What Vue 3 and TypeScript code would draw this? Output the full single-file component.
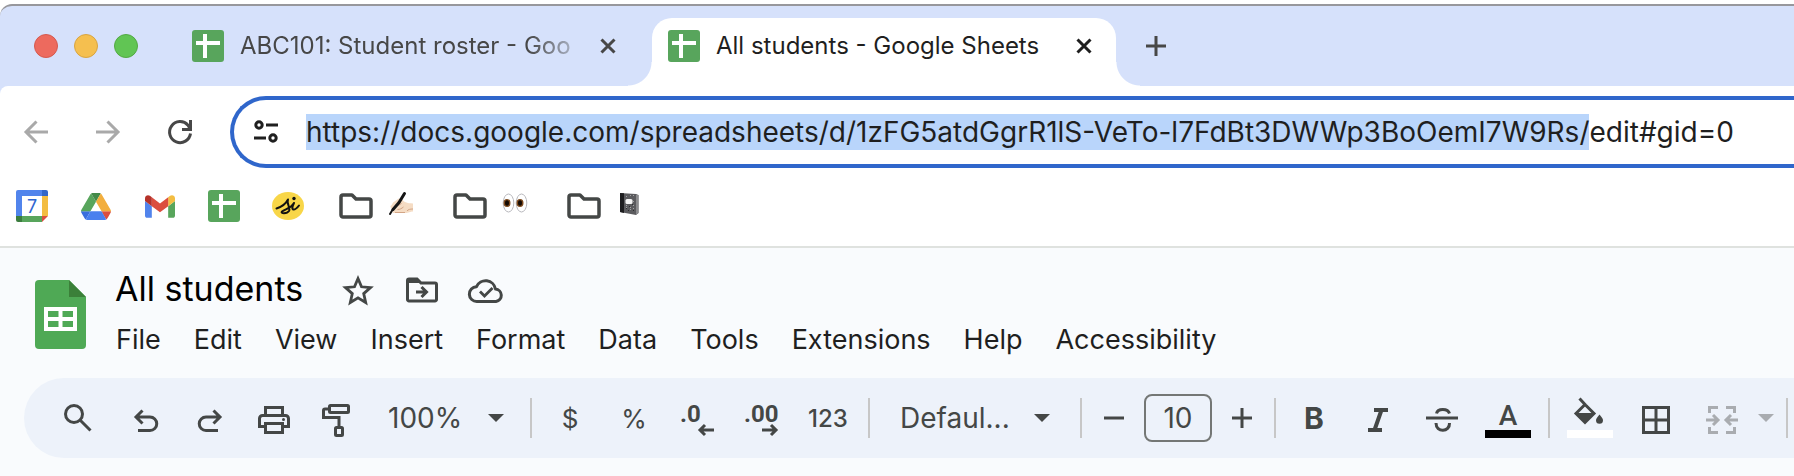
<script setup lang="ts">
import { onMounted, ref } from 'vue'

const url = ref('https://docs.google.com/spreadsheets/d/1zFG5atdGgrR1lS-VeTo-l7FdBt3DWWp3BoOemI7W9Rs/edit#gid=0')
const address = ref<HTMLInputElement | null>(null)
const zoom = ref('100%')
const font = ref('Defaul...')
const fontSize = ref('10')

const menus: string[] = ['File', 'Edit', 'View', 'Insert', 'Format', 'Data', 'Tools', 'Extensions', 'Help', 'Accessibility']
const folders: string[] = ['writing', 'eyes', 'notebook']

onMounted(() => {
  const el = address.value
  if (!el) return
  el.focus()
  el.setSelectionRange(0, url.value.lastIndexOf('/') + 1)
})
</script>

<template>
  <div class="window">
    <header class="tabstrip">
      <div class="lights">
        <button class="light red" aria-label="Close window"></button>
        <button class="light yellow" aria-label="Minimize window"></button>
        <button class="light green" aria-label="Zoom window"></button>
      </div>
      <div class="tab">
        <svg class="i32" viewBox="0 0 32 32"><rect width="32" height="32" rx="3" fill="#58a55c" /><path d="M13 4v24M4 13h24" stroke="#fff" stroke-width="4" /></svg>
        <span class="tab-title faded">ABC101: Student roster - Goo</span>
        <button class="close" aria-label="Close tab"><svg viewBox="0 0 16 16"><path d="M1.500 1.500l13 13M14.500 1.500l-13 13" /></svg></button>
      </div>
      <div class="tab active">
        <svg class="i32" viewBox="0 0 32 32"><rect width="32" height="32" rx="3" fill="#58a55c" /><path d="M13 4v24M4 13h24" stroke="#fff" stroke-width="4" /></svg>
        <span class="tab-title">All students - Google Sheets</span>
        <button class="close" aria-label="Close tab"><svg viewBox="0 0 16 16"><path d="M1.500 1.500l13 13M14.500 1.500l-13 13" /></svg></button>
      </div>
      <button class="newtab" aria-label="New tab"><svg viewBox="0 0 20 20"><path d="M10 0v20M0 10h20" /></svg></button>
    </header>

    <div class="nav-back">
      <nav class="navbar">
        <button class="nav dim" aria-label="Back"><svg viewBox="0 0 24 24"><path d="M24 12H2M12.500 1.500L2 12l10.500 10.500" /></svg></button>
        <button class="nav dim" aria-label="Forward"><svg viewBox="0 0 24 24"><path d="M0 12h22M11.500 1.500L22 12 11.500 22.500" /></svg></button>
        <button class="nav" aria-label="Reload"><svg viewBox="0 0 24 24"><path d="M22.500 13.500A10.500 10.500 0 1 1 20 5.200L22 8.500M22.500 0v9.500H14" /></svg></button>
        <label class="omnibox">
          <svg class="tune" viewBox="0 0 24 24"><circle cx="5" cy="5" r="3.200" /><path d="M12 5h12M0 18h12" /><circle cx="19" cy="18" r="3.200" /></svg>
          <input ref="address" v-model="url" type="text" spellcheck="false" aria-label="Address" />
        </label>
      </nav>
    </div>

    <div class="bookmarks">
      <a href="#" aria-label="Calendar">
        <svg class="i32" viewBox="0 0 32 32">
          <path d="M2 0h24v6H6v20H0V2a2 2 0 0 1 2-2z" fill="#5184ec" /><path d="M26 0h4a2 2 0 0 1 2 2v4h-6z" fill="#3367c9" />
          <path d="M26 6h6v20h-6z" fill="#f3bd42" /><path d="M6 26h20v6H6z" fill="#58a55c" /><path d="M0 26h6v6H2a2 2 0 0 1-2-2z" fill="#3b7d3e" />
          <path d="M26 26h6l-6 6z" fill="#db4e3f" /><path d="M6 6h20v20H6z" fill="#fff" />
          <text x="16" y="22.500" text-anchor="middle" font-size="18" fill="#2f66d0">7</text>
        </svg>
      </a>
      <a href="#" aria-label="Drive">
        <svg class="app" viewBox="0 0 87.3 78">
          <path d="m6.600 66.850 3.850 6.650c.8 1.400 1.950 2.500 3.300 3.300l13.750-23.800h-27.500c0 1.550.4 3.100 1.200 4.500z" fill="#3a6fde" />
          <path d="m43.650 25-13.750-23.800c-1.350.8-2.500 1.900-3.300 3.300l-25.400 44a9.060 9.060 0 0 0-1.200 4.500h27.500z" fill="#58a55c" />
          <path d="m73.550 76.800c1.350-.8 2.500-1.900 3.300-3.300l1.600-2.750 7.650-13.250c.8-1.400 1.200-2.950 1.200-4.500h-27.500l5.850 11.500z" fill="#db4e3f" />
          <path d="m43.650 25 13.750-23.800c-1.350-.8-2.900-1.200-4.500-1.200h-18.500c-1.600 0-3.150.45-4.500 1.200z" fill="#438a48" />
          <path d="m59.800 53h-32.300l-13.750 23.800c1.350.8 2.900 1.200 4.500 1.200h50.800c1.600 0 3.150-.45 4.500-1.200z" fill="#4a80ee" />
          <path d="m73.400 26.500-12.700-22c-.8-1.400-1.950-2.500-3.300-3.300l-13.750 23.800 16.150 28h27.450c0-1.550-.4-3.100-1.200-4.500z" fill="#f2ae3d" />
        </svg>
      </a>
      <a href="#" aria-label="Gmail">
        <svg class="app" viewBox="52 42 88 66">
          <path fill="#5184ec" d="M58 108h14V74L52 59v43c0 3.320 2.690 6 6 6" /><path fill="#58a55c" d="M120 108h14c3.320 0 6-2.690 6-6V59l-20 15" />
          <path fill="#f3bd42" d="M120 48v26l20-15v-8c0-7.420-8.470-11.650-14.400-7.200" /><path fill="#db4e3f" d="M72 74V48l24 18 24-18v26L96 92" />
          <path fill="#b5322a" d="M52 51v8l20 15V48l-5.600-4.200c-5.940-4.450-14.400-.22-14.400 7.200" />
        </svg>
      </a>
      <a href="#" aria-label="Sheets">
        <svg class="i32" viewBox="0 0 32 32"><rect width="32" height="32" rx="3" fill="#58a55c" /><path d="M13 4v24M4 13h24" stroke="#fff" stroke-width="4" /></svg>
      </a>
      <a href="#" aria-label="si">
        <svg class="i32" viewBox="0 0 32 32">
          <ellipse cx="16" cy="16" rx="16" ry="14" fill="#f8d648" />
          <path d="M4.500 18.500C9 17 14 13.500 16 9.500c-2 4 3 8 1 11.500-2 3-9 2.500-7 .5 3-2.500 9-3 12-8.500-1.500 3-2.500 6.500-.5 6.500s4-2 5.500-4" fill="none" stroke="#111" stroke-width="2" stroke-linecap="round" stroke-linejoin="round" />
          <circle cx="22" cy="8.500" r="1.700" fill="#111" />
        </svg>
      </a>
      <div class="folders">
        <a v-for="f in folders" :key="f" href="#" class="folder" :aria-label="f">
          <svg class="dir" viewBox="0 0 34 26"><path d="M4 2h9l4 4h13a2 2 0 0 1 2 2v14a2 2 0 0 1-2 2H4a2 2 0 0 1-2-2V4a2 2 0 0 1 2-2z" fill="none" stroke="#444746" stroke-width="3.500" stroke-linejoin="round" /></svg>
          <svg v-if="f === 'writing'" class="emoji" viewBox="0 0 24 24">
            <path d="M1.500 14c2-1 2-4 4-4.500C8 8 9 6 11.500 6.500 14 7 13.500 9 16 10c3 1.500 5 1 8 1.500v8c-3 0-4 1.500-8 1.500H5c-2 0-2-1.500-.5-2.500l2-1C4 18 1 16 1.500 14z" fill="#f5dcc4" />
            <path d="M7 13.500c2.500 0 4-1 5.500-2M8.500 17.500c2.500 0 4-1 6-2.500M18 19c1-1.500 3-2 6-2M6 20.500h10" fill="none" stroke="#d3a586" stroke-width="1" />
            <path d="M15.500 1.500L10 10.500 4 17.500" fill="none" stroke="#151515" stroke-width="3" stroke-linecap="round" />
            <path d="M4 17L1 22" stroke="#151515" stroke-width="2" stroke-linecap="round" />
          </svg>
          <svg v-else-if="f === 'eyes'" class="emoji" viewBox="0 0 24 24">
            <ellipse cx="5.500" cy="11" rx="5.300" ry="9" fill="#fff" stroke="#b8b8bd" /><ellipse cx="18.500" cy="11" rx="5.300" ry="9" fill="#fff" stroke="#b8b8bd" />
            <ellipse cx="4" cy="11" rx="3.500" ry="4" fill="#7d4a1e" /><ellipse cx="17" cy="11" rx="3.500" ry="4" fill="#7d4a1e" />
            <ellipse cx="4" cy="11" rx="2" ry="2.800" fill="#130a04" /><ellipse cx="17" cy="11" rx="2" ry="2.800" fill="#130a04" />
          </svg>
          <svg v-else class="emoji" viewBox="0 0 24 24">
            <path d="M3 1l16 1 2.500 1v18L19 23 3 20z" fill="#5b5b5e" /><path d="M3 1l4 .3V21l-4-1z" fill="#1d1d1f" /><path d="M19 3v19.500l2.500-1.500V3z" fill="#8b8b8d" />
            <path d="M9 4l1 1m3-2l1 1m2-1l1 1m-8 10l1-1m3 3l1-1m2-2l1 1m0-5l-1 1m-7 5l1 1m3 1l1 1m2-2l1 1" stroke="#a4a4a6" />
            <path d="M9 17l1-1m2-2l1 1m3 4l1-1m-6 1l1-1m3-6l1 1" stroke="#2c2c2e" />
            <rect x="8.500" y="7" width="7" height="5" rx="1.500" fill="#f4f4f4" />
          </svg>
        </a>
      </div>
    </div>

    <main class="sheets">
      <div class="doc">
        <a class="logo" href="#" aria-label="Sheets home">
          <svg viewBox="0 0 52 70">
            <path d="M4 0h30l17 17v48a4 4 0 0 1-4 4H4a4 4 0 0 1-4-4V4a4 4 0 0 1 4-4z" fill="#4fa955" /><path d="M34 0l17 17H34z" fill="#3b8039" />
            <path d="M9 27h33v24H9zM13 31v6h10.500v-6zM27.500 31v6H38v-6zM13 41v6h10.500v-6zM27.500 41v6H38v-6z" fill="#fff" fill-rule="evenodd" />
          </svg>
        </a>
        <div class="doc-main">
          <div class="title-row">
            <h1>All students</h1>
            <button aria-label="Star"><svg viewBox="0 0 36 36"><path d="M18 5.500l3.500 8.300 9 .8-6.800 6 2 8.900-7.700-4.700-7.700 4.700 2-8.900-6.800-6 9-.8z" fill="none" stroke="#444746" stroke-width="2.800" /></svg></button>
            <button aria-label="Move"><svg viewBox="0 0 36 36"><path d="M5 6h8l4 4h14a1.500 1.500 0 0 1 1.500 1.500v15A1.500 1.500 0 0 1 31 28H5a1.500 1.500 0 0 1-1.500-1.500v-19A1.500 1.500 0 0 1 5 6z" fill="none" stroke="#444746" stroke-width="3" /><path d="M4 5h9l4 5H4z" fill="#444746" /><path d="M12 19h10M17.500 14l5 5-5 5" fill="none" stroke="#444746" stroke-width="3" /></svg></button>
            <button aria-label="Saved to Drive"><svg viewBox="0 0 36 36"><path d="M9 28.500a7.400 7.400 0 0 1-.5-14.800A10 10 0 0 1 27.500 16a6.300 6.300 0 0 1 .5 12.500z" fill="none" stroke="#444746" stroke-width="3" stroke-linejoin="round" /><path d="M12 18.500l4.500 4.500 8-8" fill="none" stroke="#444746" stroke-width="2.800" /></svg></button>
          </div>
          <div class="menus" role="menubar">
            <button v-for="m in menus" :key="m" role="menuitem">{{ m }}</button>
          </div>
        </div>
      </div>

      <div class="toolbar" role="toolbar">
        <button class="tool first" aria-label="Search"><svg class="ic" viewBox="0 0 40 40"><circle cx="16" cy="16" r="8.500" /><path d="M22 22l10.500 10.500" /></svg></button>
        <button class="tool" aria-label="Undo"><svg class="ic" viewBox="0 0 40 40"><path d="M12 32.500h12a6.750 6.750 0 0 0 0-13.500H10M16.500 12.500L10 19l6.500 6.500" /></svg></button>
        <button class="tool" aria-label="Redo"><svg class="ic" viewBox="0 0 40 40"><path d="M28 32.500H16A6.750 6.750 0 0 1 16 19h14M23.500 12.500L30 19l-6.500 6.500" /></svg></button>
        <button class="tool" aria-label="Print"><svg class="ic" viewBox="0 0 40 40"><path d="M11.500 17V9.500h17V17M11.500 28.500h-6v-8a3 3 0 0 1 3-3h23a3 3 0 0 1 3 3v8h-6M11.500 25.500h17v9h-17z" /><circle cx="29.500" cy="21.500" r="1.500" class="solid" /></svg></button>
        <button class="tool" aria-label="Paint format"><svg class="ic" viewBox="0 0 40 40"><rect x="11.500" y="7.500" width="19" height="7" rx="1" /><path d="M11 11H7a1.500 1.500 0 0 0-1.500 1.500v7h15.500V29" /><rect x="17.500" y="29.500" width="7" height="8" rx="1" /></svg></button>
        <label class="pick zoom">
          <select v-model="zoom" aria-label="Zoom"><option>100%</option><option>75%</option></select>
          <svg class="caret" viewBox="0 0 16 8"><path d="M0 0h16L8 8z" /></svg>
        </label>
        <i class="sep"></i>
        <button class="tool mid" aria-label="Format as currency">$</button>
        <button class="tool mid" aria-label="Format as percent">%</button>
        <button class="tool" aria-label="Decrease decimals"><svg class="ic" viewBox="0 0 40 40"><text x="2" y="24" class="dec">.0</text><path d="M36 32H22M27 27l-5 5 5 5" /></svg></button>
        <button class="tool" aria-label="Increase decimals"><svg class="ic" viewBox="0 0 40 40"><text x="2" y="24" class="dec">.00</text><path d="M20 32h14M29 27l5 5-5 5" /></svg></button>
        <button class="tool num">123</button>
        <i class="sep"></i>
        <label class="pick font">
          <select v-model="font" aria-label="Font"><option>Defaul...</option><option>Arial</option></select>
          <svg class="caret" viewBox="0 0 16 8"><path d="M0 0h16L8 8z" /></svg>
        </label>
        <i class="sep"></i>
        <div class="stepper">
          <button class="step" aria-label="Decrease font size"><svg viewBox="0 0 20 20"><path d="M0 10h20" /></svg></button>
          <input v-model="fontSize" class="size" type="text" aria-label="Font size" />
          <button class="step" aria-label="Increase font size"><svg viewBox="0 0 20 20"><path d="M0 10h20M10 0v20" /></svg></button>
        </div>
        <i class="sep"></i>
        <button class="tool bold" aria-label="Bold">B</button>
        <button class="tool" aria-label="Italic"><svg class="ic" viewBox="0 0 40 40"><path d="M16 12h14M10 32h14M23.500 12l-7 20" class="thick" /></svg></button>
        <button class="tool" aria-label="Strikethrough"><svg class="ic" viewBox="0 0 40 40"><path d="M4 20h32M14.500 15.500c1-5.500 11.500-5.500 13 0M14 25c0 10 14 9.500 13.500 0" /></svg></button>
        <button class="tool wide textcolor" aria-label="Text color"><svg class="ic" viewBox="0 0 40 40"><text x="20" y="27" text-anchor="middle" class="letter">A</text><path d="M-3 32h46v8H-3z" class="black" /></svg></button>
        <i class="sep"></i>
        <button class="tool wide" aria-label="Fill color"><svg class="ic" viewBox="0 0 40 40"><path d="M9.500.500L15.500 7 24 15.500 15 24.500 6 15.500 15 6.500" /><path d="M5 15h20L15 25z" class="solid" /><path d="M29.500 16.500c2 2.500 3.500 4 3.500 5.700a3.500 3.500 0 0 1-7 0c0-1.700 1.500-3.200 3.500-5.700z" class="solid" /><path d="M-3 32h46v8H-3z" class="white" /></svg></button>
        <button class="tool" aria-label="Borders"><svg class="ic" viewBox="0 0 40 40"><path d="M7.500 9.500h25v25h-25zM20 9.500v25M7.500 22h25" /></svg></button>
        <button class="tool wide merge" aria-label="Merge cells"><svg class="ic" viewBox="0 0 40 40"><path d="M7.500 15V9.500H16M24 9.500h8.500V15M7.500 29v5.500H16M24 34.500h8.500V29M4 22h12M11 17l5 5-5 5M36 22H24M29 17l-5 5 5 5" /></svg></button>
        <button class="more" aria-label="Merge options"><svg class="caret" viewBox="0 0 16 8"><path d="M0 0h16L8 8z" /></svg></button>
        <i class="sep"></i>
      </div>
    </main>
  </div>
</template>

<style>
body { margin: 0; background: #f9fbfd; }
</style>

<style scoped>
.window { padding-top: 4px; background: #fff; font-family: Inter, "Liberation Sans", sans-serif; color: #1f1f1f; overflow: hidden; }
button, input, select { font: inherit; color: inherit; border: 0; background: none; padding: 0; margin: 0; outline: none; appearance: none; }
button, a { display: flex; align-items: center; justify-content: center; flex: none; color: inherit; text-decoration: none; }
svg { display: block; flex: none; overflow: visible; }
.i32 { width: 32px; height: 32px; }

.tabstrip { display: flex; box-sizing: border-box; height: 82px; padding-left: 34px; border-top: 2px solid #97979c; border-top-left-radius: 12px; background: #d6e1fb; }
.lights { display: flex; gap: 16px; align-items: center; width: 142px; }
.light { width: 24px; height: 24px; border-radius: 50%; border: 1px solid; }
.red { background: #ed6a5e; border-color: #d5594e; }
.yellow { background: #f5bf4f; border-color: #d8a441; }
.green { background: #61c554; border-color: #53a943; }
.tab { position: relative; display: flex; align-items: center; box-sizing: border-box; margin-top: 12px; padding: 0 36px 12px 16px; border-radius: 20px 20px 0 0; width: 476px; font-size: 24px; color: #474747; }
.tab .i32 { margin-right: 16px; }
.tab-title { flex: 1; white-space: nowrap; line-height: 32px; }
.faded { mask-image: linear-gradient(to right, #000 80%, transparent 98%); }
.tab.active { width: 464px; padding-right: 24px; background: #fff; color: #1f1f1f; }
.tab.active::before, .tab.active::after { content: ""; position: absolute; bottom: 0; width: 24px; height: 24px; }
.tab.active::before { right: 100%; background: radial-gradient(circle at 0 0, transparent 23px, #fff 24px); }
.tab.active::after { left: 100%; background: radial-gradient(circle at 100% 0, transparent 23px, #fff 24px); }
.close svg { width: 16px; height: 16px; }
.close path, .newtab path { stroke: currentColor; stroke-width: 3; }
.newtab { margin: 0 30px; color: #474747; }
.newtab svg { width: 20px; height: 20px; }

.nav-back { background: #d6e1fb; }
.navbar { display: flex; align-items: center; padding: 10px 0 0 24px; background: #fff; border-top-left-radius: 8px; }
.nav { width: 24px; height: 24px; margin-right: 48px; color: #474747; }
.nav:nth-child(3) { margin-right: 38px; }
.nav.dim { color: #a9a9a9; }
.nav svg { width: 24px; height: 24px; fill: none; stroke: currentColor; stroke-width: 3; }
.omnibox { flex: 1; display: flex; align-items: center; box-sizing: border-box; height: 72px; padding-left: 20px; border: 4px solid #2f66cb; border-right: 0; border-radius: 36px 0 0 36px; }
.tune { width: 24px; height: 24px; margin-right: 28px; fill: none; stroke: #1f1f1f; stroke-width: 3; }
.omnibox input { flex: 1; min-width: 0; height: 36px; line-height: 36px; font-size: 28px; caret-color: transparent; }
.omnibox input::selection { background: #b9d5fb; color: #1f1f1f; }

.bookmarks { display: flex; align-items: center; gap: 32px; height: 76px; padding: 0 0 2px 16px; border-bottom: 2px solid #dfe2df; }
.bookmarks > a { width: 32px; }
.app { width: 30px; height: 27px; }
.folders { display: flex; gap: 40px; padding-left: 3px; }
.folder { gap: 16px; }
.dir { width: 34px; height: 26px; }
.emoji { width: 24px; height: 24px; margin-bottom: 4px; }

.sheets { padding-bottom: 18px; background: #f9fbfd; }
.doc { display: flex; padding: 20px 0 14px 35px; }
.logo { width: 52px; height: 70px; margin: 12px 28px 0 0; }
.logo svg { width: 52px; height: 70px; }
.title-row { display: flex; align-items: center; gap: 28px; height: 46px; }
h1 { align-self: flex-start; margin: 0 9px 0 0; font-size: 34px; font-weight: 400; line-height: 42px; color: #000; }
.title-row button svg { width: 36px; height: 36px; }
.menus { display: flex; gap: 33px; height: 50px; padding-left: 1px; font-size: 27px; }
.toolbar { display: flex; align-items: center; height: 80px; margin-left: 24px; padding-left: 22px; border-radius: 40px 0 0 40px; background: #edf2fa; color: #444746; }
.tool { width: 64px; height: 56px; font-size: 24px; font-weight: 500; }
.tool.wide { width: 68px; }
.first { margin-right: 4px; }
.textcolor { margin-right: 6px; }
.ic { width: 40px; height: 40px; fill: none; stroke: currentColor; stroke-width: 3; }
.ic text, .ic .solid { fill: currentColor; stroke: none; }
.ic .black { fill: #000; stroke: none; }
.ic .white { fill: #fff; stroke: none; }
.ic .thick { stroke-width: 4; }
.dec { font: 700 24px Roboto, sans-serif; }
.letter { font: 500 28px Roboto, sans-serif; }
.tool.mid { font-size: 26px; font-weight: 400; }
.tool.num { width: 68px; margin-right: 6px; }
.tool.bold { font-size: 30px; font-weight: 700; }
.pick { display: flex; align-items: center; justify-content: space-between; box-sizing: border-box; font-size: 28px; flex: none; }
.zoom { width: 160px; padding: 0 26px 0 18px; }
.font { width: 204px; padding: 0 30px 0 24px; }
.caret { width: 16px; height: 8px; fill: currentColor; }
.sep { flex: none; width: 2px; height: 40px; margin-right: 6px; background: #c7c7c7; }
.stepper { display: flex; align-items: center; gap: 10px; padding: 0 12px 0 6px; }
.step { width: 40px; height: 40px; }
.step svg { width: 20px; height: 20px; stroke: currentColor; stroke-width: 3; }
.size { box-sizing: border-box; flex: none; width: 68px; height: 48px; border: 2px solid #747775; border-radius: 8px; text-align: center; font-size: 28px; }
.merge, .more { color: #a9acb0; }
.more { width: 20px; height: 40px; margin-right: 10px; }
</style>
